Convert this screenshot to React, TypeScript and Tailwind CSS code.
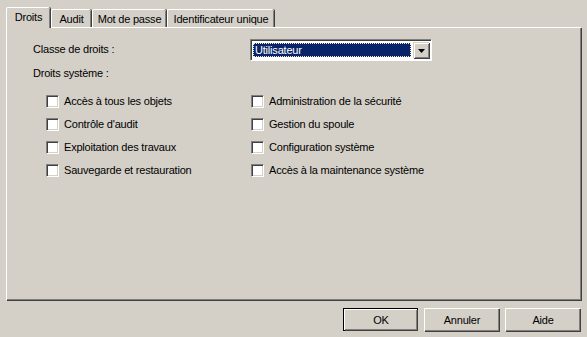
import React from "react";

const font = "font-['Liberation_Sans',Arial,sans-serif] text-[11px] leading-[13px] tracking-[-0.2px] text-black";

function Tab({ label, w, active }: { label: string; w: string; active?: boolean }) {
  if (active) {
    return (
      <div
        className={`relative z-10 -mb-px flex h-[21px] ${w} items-start justify-center rounded-tl-[2px] rounded-tr-[2px] border-l border-t border-white bg-[#d4d0c8] pt-[3px] shadow-[inset_-1px_0_#808080,1px_0_#404040]`}
      >
        {label}
      </div>
    );
  }
  return (
    <div
      className={`flex h-[18px] ${w} items-start justify-center rounded-tl-[2px] rounded-tr-[2px] border-l border-t border-white bg-[#d4d0c8] pt-[3px] shadow-[inset_-1px_0_#808080,1px_0_#404040]`}
    >
      {label}
    </div>
  );
}

function Check({ label }: { label: string }) {
  return (
    <div className="flex h-[23px] items-center">
      <span className="block h-[13px] w-[13px] border-l border-t border-b border-r border-t-[#808080] border-l-[#808080] border-b-white border-r-white bg-white shadow-[inset_1px_1px_#404040,inset_-1px_-1px_#d4d0c8]" />
      <span className="ml-[5px]">{label}</span>
    </div>
  );
}

function Btn({ label, def }: { label: string; def?: boolean }) {
  return (
    <div className={`h-[23px] w-[75px] ${def ? "border border-black" : ""}`}>
      <div className="flex h-full w-full items-center justify-center border-l border-t border-white bg-[#d4d0c8] shadow-[inset_-1px_-1px_#808080,1px_1px_#404040]">
        {label}
      </div>
    </div>
  );
}

export default function App() {
  const left = ["Accès à tous les objets", "Contrôle d'audit", "Exploitation des travaux", "Sauvegarde et restauration"];
  const right = ["Administration de la sécurité", "Gestion du spoule", "Configuration système", "Accès à la maintenance système"];

  return (
    <div className={`h-[337px] w-[587px] overflow-hidden bg-[#d4d0c8] px-[6px] pt-[7px] ${font}`}>
      {/* onglets */}
      <div className="flex h-[20px] items-end">
        <Tab label="Droits" w="w-[44px]" active />
        <div className="w-px" />
        <Tab label="Audit" w="w-[40px]" />
        <div className="w-px" />
        <Tab label="Mot de passe" w="w-[74px]" />
        <div className="w-px" />
        <Tab label="Identificateur unique" w="w-[107px]" />
      </div>

      {/* panneau */}
      <div className="h-[273px] border-l border-t border-white pl-[26px] pt-[11px] shadow-[inset_-1px_-1px_#808080,1px_1px_#404040]">
        <div className="flex items-center">
          <div className="w-[217px]">Classe de droits :</div>
          <div className="flex h-[21px] w-[181px] items-center border-l border-t border-[#808080] bg-white pl-[2px] pr-[2px] shadow-[inset_1px_1px_#404040,1px_1px_#ffffff]">
            <div className="flex h-[14px] flex-1 items-center border border-dotted border-[#f5f0c0] bg-[#0a246a] pl-[1px] text-white">
              Utilisateur
            </div>
            <div className="ml-[2px] flex h-[16px] w-[16px] items-center justify-center border-l border-t border-[#d4d0c8] bg-[#d4d0c8] shadow-[inset_1px_1px_#ffffff,inset_-1px_-1px_#808080,1px_1px_#404040]">
              <svg width="7" height="4" viewBox="0 0 7 4">
                <path d="M0 0h7L3.5 4z" fill="#000" />
              </svg>
            </div>
          </div>
        </div>

        <div className="mt-[7px]">Droits système :</div>

        <div className="ml-[13px] mt-[10px] grid grid-cols-[205px_1fr]">
          {left.map((l, i) => (
            <React.Fragment key={i}>
              <Check label={l} />
              <Check label={right[i]} />
            </React.Fragment>
          ))}
        </div>
      </div>

      {/* boutons */}
      <div className="mt-[8px] flex justify-end gap-[6px] pr-px">
        <Btn label="OK" def />
        <Btn label="Annuler" />
        <Btn label="Aide" />
      </div>
    </div>
  );
}
